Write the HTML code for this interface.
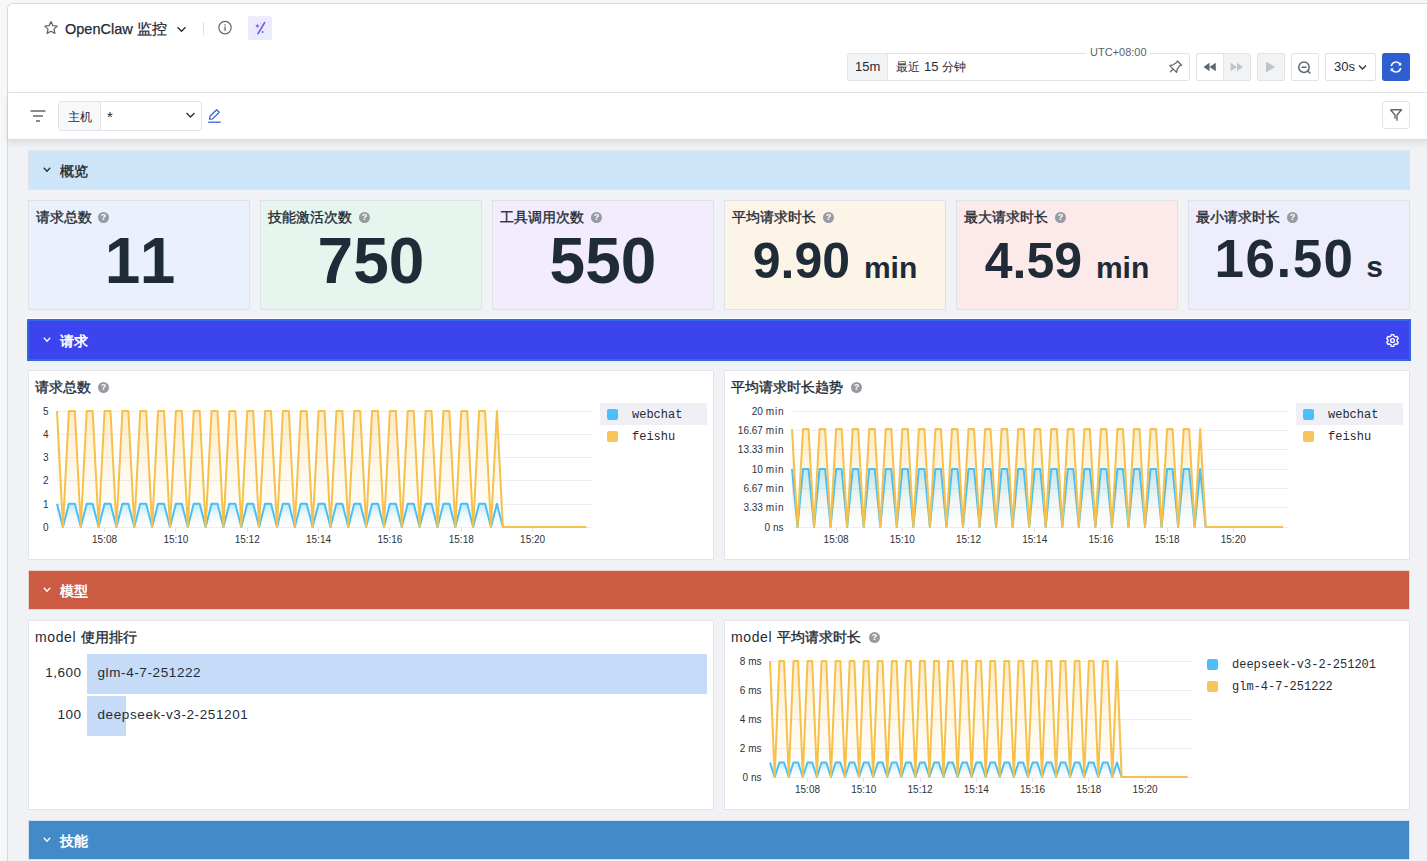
<!DOCTYPE html><html><head><meta charset="utf-8"><title>OpenClaw 监控</title><style>
*{box-sizing:border-box;margin:0;padding:0}
html,body{width:1427px;height:861px;overflow:hidden;background:#f6f7f8;font-family:"Liberation Sans", sans-serif;color:#1f2b36}
.a{position:absolute}
#frame{position:absolute;left:7px;top:3px;width:1440px;height:900px;border:1px solid #d6d9dd;border-radius:6px;background:#f0f2f5;overflow:hidden}
.sec{position:absolute;left:28px;width:1382px;height:40px;border:1px solid #dfe2e7}
.sec .chev{position:absolute;left:15px;top:16px;width:7px;height:7px}
.sec .t{position:absolute;left:31px;top:11px;font-size:14px;font-weight:400;-webkit-text-stroke:0.4px currentColor;line-height:18px}
.card{position:absolute;top:200px;width:222px;height:110px;border:1px solid #dfe3e8}
.card .t{position:absolute;left:7px;top:7px;font-size:14px;font-weight:400;-webkit-text-stroke:0.35px currentColor;line-height:18px;white-space:nowrap}
.q{position:absolute;-webkit-text-stroke:0;width:11px;height:11px;border-radius:50%;background:#979ba1;color:#fff;font-size:9px;line-height:11px;text-align:center;font-weight:bold;font-family:"Liberation Sans", sans-serif}
.card .v{position:absolute;left:0;right:0;top:28px;text-align:center;font-weight:bold;white-space:nowrap}
.panel{position:absolute;width:686px;height:190px;border:1px solid #e1e4e8;background:#fff}
.ptitle{position:absolute;font-size:14px;font-weight:400;-webkit-text-stroke:0.35px currentColor;line-height:18px;white-space:nowrap}
.btn{position:absolute;top:53px;height:28px;border:1px solid #dfe2e6;border-radius:2px;background:#fff}
.leg{position:absolute;font-family:"Liberation Mono", monospace;font-size:12px;line-height:22px;height:22px;white-space:nowrap}
.leg i{position:absolute;left:7px;top:6px;width:11px;height:11px;border-radius:2px}
.leg span{position:absolute;left:32px;top:1px}
</style></head><body>
<div id="frame"></div>
<div class="a" style="left:8px;top:4px;width:1419px;height:88px;background:#fff;border-top-left-radius:5px"></div>
<div class="a" style="left:8px;top:92px;width:1419px;height:1px;background:#e3e5e9"></div>
<div class="a" style="left:8px;top:93px;width:1419px;height:47px;background:#fff;border-bottom:1px solid #dcdde1;box-shadow:0 3px 6px rgba(20,30,50,0.1)"></div>
<svg class="a" style="left:43px;top:20px" width="16" height="16" viewBox="0 0 16 16"><path d="M8 1.6 L9.9 5.6 L14.2 6.1 L11 9.1 L11.9 13.4 L8 11.2 L4.1 13.4 L5 9.1 L1.8 6.1 L6.1 5.6 Z" fill="none" stroke="#5f6870" stroke-width="1.3" stroke-linejoin="round"/></svg>
<div class="a" style="left:65px;top:20px;font-size:14.5px;line-height:18px;white-space:nowrap;color:#1f2b36;-webkit-text-stroke:0.25px currentColor">OpenClaw</div><div class="a" style="left:137px;top:20px;font-size:14.5px;line-height:18px;white-space:nowrap;color:#1f2b36;-webkit-text-stroke:0.25px currentColor">监控</div>
<svg class="a" style="left:176px;top:25px" width="11" height="9" viewBox="0 0 11 9"><path d="M1.5 2.2 L5.5 6.2 L9.5 2.2" fill="none" stroke="#2a333c" stroke-width="1.5"/></svg>
<div class="a" style="left:203px;top:22px;width:1px;height:13px;background:#dcdfe3"></div>
<svg class="a" style="left:217px;top:20px" width="16" height="16" viewBox="0 0 16 16"><circle cx="8" cy="7.6" r="6.2" fill="none" stroke="#5f6870" stroke-width="1.2"/><rect x="7.4" y="6.6" width="1.3" height="4.2" fill="#5f6870"/><rect x="7.4" y="4.3" width="1.3" height="1.3" fill="#5f6870"/></svg>
<div class="a" style="left:248px;top:16px;width:24px;height:24px;border-radius:2px;background:linear-gradient(135deg,#f1ecfc,#ebeafb 60%,#e8eefb)"></div>
<svg class="a" style="left:248px;top:12px" width="24" height="28" viewBox="0 0 24 28"><path d="M16.6 10.6 L10 21.6" stroke="#6a5cf2" stroke-width="1.7" stroke-linecap="round"/><path d="M9.4 11.8 l0.7 1.5 1.5 0.7 -1.5 0.7 -0.7 1.5 -0.7 -1.5 -1.5 -0.7 1.5 -0.7z" fill="#6a5cf2"/><circle cx="14.6" cy="20" r="0.95" fill="#6a5cf2"/><circle cx="12.4" cy="11.2" r="0.5" fill="#9d94f5"/></svg>
<div class="a" style="left:847px;top:53px;width:343px;height:28px;border:1px solid #dfe2e6;border-radius:3px;background:#fff"></div>
<div class="a" style="left:848px;top:54px;width:40px;height:26px;background:#f2f3f5;border-right:1px solid #e3e5e9"></div>
<div class="a" style="left:855px;top:58px;font-size:13px;line-height:18px;color:#1f2b36">15m</div>
<div class="a" style="left:896px;top:58px;font-size:12px;line-height:18px;color:#1f2b36;white-space:nowrap">最近</div><div class="a" style="left:924px;top:58px;font-size:13px;line-height:18px;color:#1f2b36">15</div><div class="a" style="left:942px;top:58px;font-size:12px;line-height:18px;color:#1f2b36;white-space:nowrap">分钟</div>
<div class="a" style="left:1086px;top:45px;width:64px;height:14px;background:#fff"></div>
<div class="a" style="left:1090px;top:45px;font-size:11px;line-height:14px;color:#5a636b;white-space:nowrap">UTC+08:00</div>
<svg class="a" style="left:1168px;top:59px" width="15" height="15" viewBox="0 0 15 15"><path d="M9.4 2 L13.6 6.2 L11.7 6.6 L9.3 10 L8.6 13.4 L1.7 6.6 L5.1 5.8 L8.6 3.5 Z M4.9 10.3 L2.3 12.9" fill="none" stroke="#5f6870" stroke-width="1.3" stroke-linejoin="round" stroke-linecap="round"/></svg>
<div class="btn" style="left:1196px;width:55px"></div>
<div class="a" style="left:1223px;top:54px;width:27px;height:26px;background:#f2f3f5;border-left:1px solid #e3e5e9;border-radius:0 2px 2px 0"></div>
<svg class="a" style="left:1203px;top:62px" width="14" height="10" viewBox="0 0 14 10"><path d="M0.5 5 L6.5 0.8 L6.5 9.2 Z M6.5 5 L12.8 0.8 L12.8 9.2 Z" fill="#5f6870"/></svg>
<svg class="a" style="left:1230px;top:62px" width="14" height="10" viewBox="0 0 14 10"><path d="M13 5 L7 0.8 L7 9.2 Z M7 5 L0.7 0.8 L0.7 9.2 Z" fill="#bfc3c8"/></svg>
<div class="btn" style="left:1257px;width:28px;background:#f2f3f5"></div>
<svg class="a" style="left:1265px;top:61px" width="11" height="12" viewBox="0 0 11 12"><path d="M1 0.6 L10 6 L1 11.4 Z" fill="#bfc3c8"/></svg>
<div class="btn" style="left:1291px;width:28px"></div>
<svg class="a" style="left:1297px;top:60px" width="15" height="15" viewBox="0 0 15 15"><circle cx="7" cy="7.2" r="5.2" fill="none" stroke="#5f6870" stroke-width="1.5"/><path d="M4.6 7.2 H9.4 M10.9 11.1 L13.3 13.5" stroke="#5f6870" stroke-width="1.5"/></svg>
<div class="btn" style="left:1325px;width:51px"></div>
<div class="a" style="left:1334px;top:58px;font-size:13px;line-height:18px;color:#1f2b36">30s</div>
<svg class="a" style="left:1358px;top:64px" width="9" height="7" viewBox="0 0 9 7"><path d="M1 1.5 L4.5 5 L8 1.5" fill="none" stroke="#2a333c" stroke-width="1.3"/></svg>
<div class="a" style="left:1382px;top:53px;width:28px;height:28px;border-radius:3px;background:#2e5ecf"></div>
<svg class="a" style="left:1389px;top:60px" width="14" height="14" viewBox="0 0 14 14"><path d="M2.3 6.2 A4.8 4.8 0 0 1 11.2 4.4 M11.7 7.8 A4.8 4.8 0 0 1 2.8 9.6" fill="none" stroke="#fff" stroke-width="1.5"/><path d="M12.3 2.2 L12.3 5.6 L9 5.6 Z M1.7 11.8 L1.7 8.4 L5 8.4 Z" fill="#fff"/></svg>
<svg class="a" style="left:29px;top:108px" width="18" height="16" viewBox="0 0 18 16"><path d="M1.5 3 H16.5 M4 8 H14 M7 13 H11" stroke="#5f6870" stroke-width="1.5"/></svg>
<div class="a" style="left:58px;top:101px;width:144px;height:30px;border:1px solid #dfe2e6;border-radius:3px;background:#fff"></div>
<div class="a" style="left:59px;top:102px;width:42px;height:28px;background:#f7f8fa;border-right:1px solid #e3e5e9"></div>
<div class="a" style="left:68px;top:107.5px;font-size:12px;line-height:18px;color:#1f2b36">主机</div>
<div class="a" style="left:107px;top:108px;font-size:15px;line-height:18px;color:#1f2b36">*</div>
<svg class="a" style="left:185px;top:111px" width="11" height="9" viewBox="0 0 11 9"><path d="M1.5 2 L5.5 6 L9.5 2" fill="none" stroke="#2a333c" stroke-width="1.4"/></svg>
<svg class="a" style="left:207px;top:108px" width="15" height="16" viewBox="0 0 15 16"><path d="M2.5 11.2 L3 8.3 L9.6 1.7 L12.2 4.3 L5.6 10.9 Z" fill="none" stroke="#3b63d8" stroke-width="1.3" stroke-linejoin="round"/><path d="M1.2 14.2 H13.6" stroke="#3b63d8" stroke-width="1.3"/></svg>
<div class="a" style="left:1382px;top:101px;width:28px;height:28px;border:1px solid #dfe2e6;border-radius:3px;background:#fff"></div>
<svg class="a" style="left:1389px;top:108px" width="14" height="14" viewBox="0 0 14 14"><path d="M1.5 1.8 H12.5 L8 7 V12.8 M6 10.8 V7 L1.5 1.8" fill="none" stroke="#5f6870" stroke-width="1.4" stroke-linejoin="round"/></svg>
<div class="sec" style="top:150px;background:#cce5f9;"><svg class="chev" viewBox="0 0 8 6" style="width:8px;height:6px;left:14px;top:16px"><path d="M0.8 0.8 L4 4.2 L7.2 0.8" fill="none" stroke="#1f2b36" stroke-width="1.3"/></svg><div class="t" style="color:#1f2b36;-webkit-text-stroke:0.4px currentColor">概览</div></div>
<div class="a" style="left:27px;top:318px;width:1384px;height:1px;background:#fff"></div>
<div class="a" style="left:27px;top:319px;width:1384px;height:42px;background:#3b44ef;border:2px solid #2f68e2"></div>
<svg class="a" style="left:43px;top:337px" width="8" height="6" viewBox="0 0 8 6"><path d="M0.8 0.8 L4 4.2 L7.2 0.8" fill="none" stroke="#fff" stroke-width="1.3"/></svg>
<div class="a" style="left:60px;top:332px;font-size:14px;font-weight:400;-webkit-text-stroke:0.55px currentColor;line-height:18px;color:#fff">请求</div>
<svg class="a" style="left:1385px;top:333px" width="15" height="15" viewBox="0 0 24 24"><path fill="none" stroke="#fff" stroke-width="2.2" stroke-linejoin="round" d="M10 2.5 h4 l0.6 2.6 a7.5 7.5 0 0 1 2 1.2 l2.6 -0.8 2 3.4 -2 1.8 a7.5 7.5 0 0 1 0 2.4 l2 1.8 -2 3.4 -2.6 -0.8 a7.5 7.5 0 0 1 -2 1.2 l-0.6 2.6 h-4 l-0.6 -2.6 a7.5 7.5 0 0 1 -2 -1.2 l-2.6 0.8 -2 -3.4 2 -1.8 a7.5 7.5 0 0 1 0 -2.4 l-2 -1.8 2 -3.4 2.6 0.8 a7.5 7.5 0 0 1 2 -1.2 z"/><circle cx="12" cy="12" r="3" fill="none" stroke="#fff" stroke-width="2.2"/></svg>
<div class="sec" style="top:570px;background:#cc5b43;border-color:#e6d6d2"><svg class="chev" viewBox="0 0 8 6" style="width:8px;height:6px;left:14px;top:16px"><path d="M0.8 0.8 L4 4.2 L7.2 0.8" fill="none" stroke="#fff" stroke-width="1.3"/></svg><div class="t" style="color:#fff;-webkit-text-stroke:0.55px currentColor">模型</div></div>
<div class="sec" style="top:820px;background:#438ac8;border-color:#d5e0ea"><svg class="chev" viewBox="0 0 8 6" style="width:8px;height:6px;left:14px;top:16px"><path d="M0.8 0.8 L4 4.2 L7.2 0.8" fill="none" stroke="#fff" stroke-width="1.3"/></svg><div class="t" style="color:#fff;-webkit-text-stroke:0.55px currentColor">技能</div></div>
<div class="card" style="left:28px;background:#eaf1fd"><div class="t">请求总数</div>
<div class="v" style="font-size:64px;line-height:70px;top:25px ;margin-left:5px;letter-spacing:3px">11</div>
</div>
<div class="card" style="left:260px;background:#e6f6ef"><div class="t">技能激活次数</div>
<div class="v" style="font-size:64px;line-height:70px;top:25px">750</div>
</div>
<div class="card" style="left:492px;background:#f2ecfd"><div class="t">工具调用次数</div>
<div class="v" style="font-size:64px;line-height:70px;top:25px">550</div>
</div>
<div class="card" style="left:724px;background:#fdf4e8"><div class="t">平均请求时长</div>
<div class="v" style="font-size:50px;line-height:70px;top:24.5px">9.90 <span style="font-size:30px;letter-spacing:0">min</span></div>
</div>
<div class="card" style="left:956px;background:#fce9e9"><div class="t">最大请求时长</div>
<div class="v" style="font-size:50px;line-height:70px;top:24.5px">4.59 <span style="font-size:30px;letter-spacing:0">min</span></div>
</div>
<div class="card" style="left:1188px;background:#ededfb"><div class="t">最小请求时长</div>
<div class="v" style="font-size:53px;line-height:70px;top:23px;letter-spacing:1.5px;margin-left:-0.5px">16.50 <span style="font-size:30px;letter-spacing:0;margin-left:-4.5px">s</span></div>
</div>
<span class="q" style="left:98px;top:212px">?</span>
<span class="q" style="left:359px;top:212px">?</span>
<span class="q" style="left:591px;top:212px">?</span>
<span class="q" style="left:823px;top:212px">?</span>
<span class="q" style="left:1055px;top:212px">?</span>
<span class="q" style="left:1287px;top:212px">?</span>
<div class="panel" style="left:28px;top:370px"></div>
<div class="panel" style="left:724px;top:370px"></div>
<div class="panel" style="left:28px;top:620px"></div>
<div class="panel" style="left:724px;top:620px"></div>
<div class="ptitle" style="left:35px;top:378px">请求总数</div><span class="q" style="left:98px;top:381.5px">?</span>
<div class="ptitle" style="left:731px;top:378px">平均请求时长趋势</div><span class="q" style="left:851px;top:381.5px">?</span>
<div class="ptitle" style="left:35px;top:628px;letter-spacing:0.6px;-webkit-text-stroke:0">model</div><div class="ptitle" style="left:81px;top:628px">使用排行</div>
<div class="ptitle" style="left:731px;top:628px;letter-spacing:0.6px;-webkit-text-stroke:0">model</div><div class="ptitle" style="left:777px;top:628px">平均请求时长</div><span class="q" style="left:869px;top:632px">?</span>
<div class="leg" style="left:600px;top:403px;width:107px;background:#eff0f5;"><i style="background:#4cbff8"></i><span>webchat</span></div>
<div class="leg" style="left:600px;top:425px;width:107px;"><i style="background:#f8c55a"></i><span>feishu</span></div>
<div class="leg" style="left:1296px;top:403px;width:107px;background:#eff0f5;"><i style="background:#4cbff8"></i><span>webchat</span></div>
<div class="leg" style="left:1296px;top:425px;width:107px;"><i style="background:#f8c55a"></i><span>feishu</span></div>
<div class="leg" style="left:1200px;top:653px;width:200px;"><i style="background:#4cbff8"></i><span>deepseek-v3-2-251201</span></div>
<div class="leg" style="left:1200px;top:675px;width:200px;"><i style="background:#f8c55a"></i><span>glm-4-7-251222</span></div>
<div class="a" style="left:87px;top:654px;width:620px;height:40px;background:#c6dbf8"></div>
<div class="a" style="left:87px;top:696px;width:39px;height:40px;background:#c6dbf8"></div>
<div class="a" style="left:0;top:664px;width:81.5px;text-align:right;font-size:13.5px;line-height:18px;letter-spacing:0.5px">1,600</div>
<div class="a" style="left:0;top:706px;width:81.5px;text-align:right;font-size:13.5px;line-height:18px;letter-spacing:0.5px">100</div>
<div class="a" style="left:97.5px;top:664px;font-size:13.5px;line-height:18px;letter-spacing:0.6px">glm-4-7-251222</div>
<div class="a" style="left:97.5px;top:706px;font-size:13.5px;line-height:18px;letter-spacing:0.6px">deepseek-v3-2-251201</div>
<svg class="a" style="left:0;top:0" width="1427" height="861" viewBox="0 0 1427 861" font-family='"Liberation Sans", sans-serif' font-size="10" fill="#2b333b">
<defs>
<linearGradient id="go" x1="0" y1="0" x2="0" y2="1"><stop offset="0" stop-color="#f7c04a" stop-opacity="0.3"/><stop offset="0.55" stop-color="#f7c04a" stop-opacity="0.1"/><stop offset="1" stop-color="#f7c04a" stop-opacity="0"/></linearGradient>
<linearGradient id="gb" x1="0" y1="0" x2="0" y2="1"><stop offset="0" stop-color="#3fbdf4" stop-opacity="0.3"/><stop offset="0.5" stop-color="#3fbdf4" stop-opacity="0.08"/><stop offset="1" stop-color="#3fbdf4" stop-opacity="0"/></linearGradient>
</defs>
<line x1="58.0" y1="527.50" x2="593.0" y2="527.50" stroke="#eceef2" stroke-width="1"/>
<text x="48.5" y="530.60" text-anchor="end">0</text>
<line x1="58.0" y1="504.50" x2="593.0" y2="504.50" stroke="#eceef2" stroke-width="1"/>
<text x="48.5" y="507.60" text-anchor="end">1</text>
<line x1="58.0" y1="480.50" x2="593.0" y2="480.50" stroke="#eceef2" stroke-width="1"/>
<text x="48.5" y="483.60" text-anchor="end">2</text>
<line x1="58.0" y1="457.50" x2="593.0" y2="457.50" stroke="#eceef2" stroke-width="1"/>
<text x="48.5" y="460.60" text-anchor="end">3</text>
<line x1="58.0" y1="434.50" x2="593.0" y2="434.50" stroke="#eceef2" stroke-width="1"/>
<text x="48.5" y="437.60" text-anchor="end">4</text>
<line x1="58.0" y1="411.50" x2="593.0" y2="411.50" stroke="#eceef2" stroke-width="1"/>
<text x="48.5" y="414.60" text-anchor="end">5</text>
<line x1="104.50" y1="528.00" x2="104.50" y2="532.00" stroke="#dfe2e6" stroke-width="1"/>
<text x="104.56" y="543.00" text-anchor="middle">15:08</text>
<line x1="175.50" y1="528.00" x2="175.50" y2="532.00" stroke="#dfe2e6" stroke-width="1"/>
<text x="175.90" y="543.00" text-anchor="middle">15:10</text>
<line x1="247.50" y1="528.00" x2="247.50" y2="532.00" stroke="#dfe2e6" stroke-width="1"/>
<text x="247.24" y="543.00" text-anchor="middle">15:12</text>
<line x1="318.50" y1="528.00" x2="318.50" y2="532.00" stroke="#dfe2e6" stroke-width="1"/>
<text x="318.58" y="543.00" text-anchor="middle">15:14</text>
<line x1="389.50" y1="528.00" x2="389.50" y2="532.00" stroke="#dfe2e6" stroke-width="1"/>
<text x="389.92" y="543.00" text-anchor="middle">15:16</text>
<line x1="461.50" y1="528.00" x2="461.50" y2="532.00" stroke="#dfe2e6" stroke-width="1"/>
<text x="461.26" y="543.00" text-anchor="middle">15:18</text>
<line x1="532.50" y1="528.00" x2="532.50" y2="532.00" stroke="#dfe2e6" stroke-width="1"/>
<text x="532.60" y="543.00" text-anchor="middle">15:20</text>
<path d="M57.00,411.00 L62.95,527.00 L68.89,411.00 L74.84,411.00 L80.78,527.00 L86.72,411.00 L92.67,411.00 L98.62,527.00 L104.56,411.00 L110.50,411.00 L116.45,527.00 L122.40,411.00 L128.34,411.00 L134.28,527.00 L140.23,411.00 L146.18,411.00 L152.12,527.00 L158.06,411.00 L164.01,411.00 L169.96,527.00 L175.90,411.00 L181.84,411.00 L187.79,527.00 L193.74,411.00 L199.68,411.00 L205.62,527.00 L211.57,411.00 L217.52,411.00 L223.46,527.00 L229.41,411.00 L235.35,411.00 L241.30,527.00 L247.24,411.00 L253.19,411.00 L259.13,527.00 L265.08,411.00 L271.02,411.00 L276.97,527.00 L282.91,411.00 L288.86,411.00 L294.80,527.00 L300.75,411.00 L306.69,411.00 L312.63,527.00 L318.58,411.00 L324.53,411.00 L330.47,527.00 L336.42,411.00 L342.36,411.00 L348.31,527.00 L354.25,411.00 L360.19,411.00 L366.14,527.00 L372.09,411.00 L378.03,411.00 L383.98,527.00 L389.92,411.00 L395.87,411.00 L401.81,527.00 L407.75,411.00 L413.70,411.00 L419.65,527.00 L425.59,411.00 L431.54,411.00 L437.48,527.00 L443.43,411.00 L449.37,411.00 L455.31,527.00 L461.26,411.00 L467.21,411.00 L473.15,527.00 L479.10,411.00 L485.04,411.00 L490.99,527.00 L496.93,411.00 L502.88,527.00 L508.82,527.00 L514.77,527.00 L520.71,527.00 L526.65,527.00 L532.60,527.00 L538.55,527.00 L544.49,527.00 L550.43,527.00 L556.38,527.00 L562.33,527.00 L568.27,527.00 L574.22,527.00 L580.16,527.00 L586.11,527.00 L586.11,527.00 L57.00,527.00 Z" fill="url(#go)"/>
<path d="M57.00,503.80 L62.95,527.00 L68.89,503.80 L74.84,503.80 L80.78,527.00 L86.72,503.80 L92.67,503.80 L98.62,527.00 L104.56,503.80 L110.50,503.80 L116.45,527.00 L122.40,503.80 L128.34,503.80 L134.28,527.00 L140.23,503.80 L146.18,503.80 L152.12,527.00 L158.06,503.80 L164.01,503.80 L169.96,527.00 L175.90,503.80 L181.84,503.80 L187.79,527.00 L193.74,503.80 L199.68,503.80 L205.62,527.00 L211.57,503.80 L217.52,503.80 L223.46,527.00 L229.41,503.80 L235.35,503.80 L241.30,527.00 L247.24,503.80 L253.19,503.80 L259.13,527.00 L265.08,503.80 L271.02,503.80 L276.97,527.00 L282.91,503.80 L288.86,503.80 L294.80,527.00 L300.75,503.80 L306.69,503.80 L312.63,527.00 L318.58,503.80 L324.53,503.80 L330.47,527.00 L336.42,503.80 L342.36,503.80 L348.31,527.00 L354.25,503.80 L360.19,503.80 L366.14,527.00 L372.09,503.80 L378.03,503.80 L383.98,527.00 L389.92,503.80 L395.87,503.80 L401.81,527.00 L407.75,503.80 L413.70,503.80 L419.65,527.00 L425.59,503.80 L431.54,503.80 L437.48,527.00 L443.43,503.80 L449.37,503.80 L455.31,527.00 L461.26,503.80 L467.21,503.80 L473.15,527.00 L479.10,503.80 L485.04,503.80 L490.99,527.00 L496.93,503.80 L502.88,527.00 L508.82,527.00 L514.77,527.00 L520.71,527.00 L526.65,527.00 L532.60,527.00 L538.55,527.00 L544.49,527.00 L550.43,527.00 L556.38,527.00 L562.33,527.00 L568.27,527.00 L574.22,527.00 L580.16,527.00 L586.11,527.00 L586.11,527.00 L57.00,527.00 Z" fill="url(#gb)"/>
<path d="M57.00,503.80 L62.95,527.00 L68.89,503.80 L74.84,503.80 L80.78,527.00 L86.72,503.80 L92.67,503.80 L98.62,527.00 L104.56,503.80 L110.50,503.80 L116.45,527.00 L122.40,503.80 L128.34,503.80 L134.28,527.00 L140.23,503.80 L146.18,503.80 L152.12,527.00 L158.06,503.80 L164.01,503.80 L169.96,527.00 L175.90,503.80 L181.84,503.80 L187.79,527.00 L193.74,503.80 L199.68,503.80 L205.62,527.00 L211.57,503.80 L217.52,503.80 L223.46,527.00 L229.41,503.80 L235.35,503.80 L241.30,527.00 L247.24,503.80 L253.19,503.80 L259.13,527.00 L265.08,503.80 L271.02,503.80 L276.97,527.00 L282.91,503.80 L288.86,503.80 L294.80,527.00 L300.75,503.80 L306.69,503.80 L312.63,527.00 L318.58,503.80 L324.53,503.80 L330.47,527.00 L336.42,503.80 L342.36,503.80 L348.31,527.00 L354.25,503.80 L360.19,503.80 L366.14,527.00 L372.09,503.80 L378.03,503.80 L383.98,527.00 L389.92,503.80 L395.87,503.80 L401.81,527.00 L407.75,503.80 L413.70,503.80 L419.65,527.00 L425.59,503.80 L431.54,503.80 L437.48,527.00 L443.43,503.80 L449.37,503.80 L455.31,527.00 L461.26,503.80 L467.21,503.80 L473.15,527.00 L479.10,503.80 L485.04,503.80 L490.99,527.00 L496.93,503.80 L502.88,527.00 L508.82,527.00 L514.77,527.00 L520.71,527.00 L526.65,527.00 L532.60,527.00 L538.55,527.00 L544.49,527.00 L550.43,527.00 L556.38,527.00 L562.33,527.00 L568.27,527.00 L574.22,527.00 L580.16,527.00 L586.11,527.00" fill="none" stroke="#48bff7" stroke-width="2" stroke-linejoin="round"/>
<path d="M57.00,411.00 L62.95,527.00 L68.89,411.00 L74.84,411.00 L80.78,527.00 L86.72,411.00 L92.67,411.00 L98.62,527.00 L104.56,411.00 L110.50,411.00 L116.45,527.00 L122.40,411.00 L128.34,411.00 L134.28,527.00 L140.23,411.00 L146.18,411.00 L152.12,527.00 L158.06,411.00 L164.01,411.00 L169.96,527.00 L175.90,411.00 L181.84,411.00 L187.79,527.00 L193.74,411.00 L199.68,411.00 L205.62,527.00 L211.57,411.00 L217.52,411.00 L223.46,527.00 L229.41,411.00 L235.35,411.00 L241.30,527.00 L247.24,411.00 L253.19,411.00 L259.13,527.00 L265.08,411.00 L271.02,411.00 L276.97,527.00 L282.91,411.00 L288.86,411.00 L294.80,527.00 L300.75,411.00 L306.69,411.00 L312.63,527.00 L318.58,411.00 L324.53,411.00 L330.47,527.00 L336.42,411.00 L342.36,411.00 L348.31,527.00 L354.25,411.00 L360.19,411.00 L366.14,527.00 L372.09,411.00 L378.03,411.00 L383.98,527.00 L389.92,411.00 L395.87,411.00 L401.81,527.00 L407.75,411.00 L413.70,411.00 L419.65,527.00 L425.59,411.00 L431.54,411.00 L437.48,527.00 L443.43,411.00 L449.37,411.00 L455.31,527.00 L461.26,411.00 L467.21,411.00 L473.15,527.00 L479.10,411.00 L485.04,411.00 L490.99,527.00 L496.93,411.00 L502.88,527.00 L508.82,527.00 L514.77,527.00 L520.71,527.00 L526.65,527.00 L532.60,527.00 L538.55,527.00 L544.49,527.00 L550.43,527.00 L556.38,527.00 L562.33,527.00 L568.27,527.00 L574.22,527.00 L580.16,527.00 L586.11,527.00" fill="none" stroke="#f7c04a" stroke-width="2" stroke-linejoin="round"/>
<line x1="793.0" y1="527.50" x2="1289.0" y2="527.50" stroke="#eceef2" stroke-width="1"/>
<text x="783.5" y="530.60" text-anchor="end">0 ns</text>
<line x1="793.0" y1="507.50" x2="1289.0" y2="507.50" stroke="#eceef2" stroke-width="1"/>
<text x="784.5" y="510.60" text-anchor="end">3.33 <tspan letter-spacing="0.9">min</tspan></text>
<line x1="793.0" y1="488.50" x2="1289.0" y2="488.50" stroke="#eceef2" stroke-width="1"/>
<text x="784.5" y="491.60" text-anchor="end">6.67 <tspan letter-spacing="0.9">min</tspan></text>
<line x1="793.0" y1="469.50" x2="1289.0" y2="469.50" stroke="#eceef2" stroke-width="1"/>
<text x="784.5" y="472.60" text-anchor="end">10 <tspan letter-spacing="0.9">min</tspan></text>
<line x1="793.0" y1="449.50" x2="1289.0" y2="449.50" stroke="#eceef2" stroke-width="1"/>
<text x="784.5" y="452.60" text-anchor="end">13.33 <tspan letter-spacing="0.9">min</tspan></text>
<line x1="793.0" y1="430.50" x2="1289.0" y2="430.50" stroke="#eceef2" stroke-width="1"/>
<text x="784.5" y="433.60" text-anchor="end">16.67 <tspan letter-spacing="0.9">min</tspan></text>
<line x1="793.0" y1="411.50" x2="1289.0" y2="411.50" stroke="#eceef2" stroke-width="1"/>
<text x="784.5" y="414.60" text-anchor="end">20 <tspan letter-spacing="0.9">min</tspan></text>
<line x1="836.50" y1="528.00" x2="836.50" y2="532.00" stroke="#dfe2e6" stroke-width="1"/>
<text x="836.13" y="543.00" text-anchor="middle">15:08</text>
<line x1="902.50" y1="528.00" x2="902.50" y2="532.00" stroke="#dfe2e6" stroke-width="1"/>
<text x="902.32" y="543.00" text-anchor="middle">15:10</text>
<line x1="968.50" y1="528.00" x2="968.50" y2="532.00" stroke="#dfe2e6" stroke-width="1"/>
<text x="968.51" y="543.00" text-anchor="middle">15:12</text>
<line x1="1034.50" y1="528.00" x2="1034.50" y2="532.00" stroke="#dfe2e6" stroke-width="1"/>
<text x="1034.70" y="543.00" text-anchor="middle">15:14</text>
<line x1="1100.50" y1="528.00" x2="1100.50" y2="532.00" stroke="#dfe2e6" stroke-width="1"/>
<text x="1100.90" y="543.00" text-anchor="middle">15:16</text>
<line x1="1167.50" y1="528.00" x2="1167.50" y2="532.00" stroke="#dfe2e6" stroke-width="1"/>
<text x="1167.09" y="543.00" text-anchor="middle">15:18</text>
<line x1="1233.50" y1="528.00" x2="1233.50" y2="532.00" stroke="#dfe2e6" stroke-width="1"/>
<text x="1233.28" y="543.00" text-anchor="middle">15:20</text>
<path d="M792.00,428.98 L797.52,527.00 L803.03,428.98 L808.55,428.98 L814.06,527.00 L819.58,428.98 L825.10,428.98 L830.61,527.00 L836.13,428.98 L841.64,428.98 L847.16,527.00 L852.68,428.98 L858.19,428.98 L863.71,527.00 L869.22,428.98 L874.74,428.98 L880.26,527.00 L885.77,428.98 L891.29,428.98 L896.80,527.00 L902.32,428.98 L907.84,428.98 L913.35,527.00 L918.87,428.98 L924.38,428.98 L929.90,527.00 L935.42,428.98 L940.93,428.98 L946.45,527.00 L951.96,428.98 L957.48,428.98 L963.00,527.00 L968.51,428.98 L974.03,428.98 L979.54,527.00 L985.06,428.98 L990.58,428.98 L996.09,527.00 L1001.61,428.98 L1007.12,428.98 L1012.64,527.00 L1018.16,428.98 L1023.67,428.98 L1029.19,527.00 L1034.70,428.98 L1040.22,428.98 L1045.74,527.00 L1051.25,428.98 L1056.77,428.98 L1062.28,527.00 L1067.80,428.98 L1073.32,428.98 L1078.83,527.00 L1084.35,428.98 L1089.86,428.98 L1095.38,527.00 L1100.90,428.98 L1106.41,428.98 L1111.93,527.00 L1117.44,428.98 L1122.96,428.98 L1128.48,527.00 L1133.99,428.98 L1139.51,428.98 L1145.02,527.00 L1150.54,428.98 L1156.06,428.98 L1161.57,527.00 L1167.09,428.98 L1172.60,428.98 L1178.12,527.00 L1183.64,428.98 L1189.15,428.98 L1194.67,527.00 L1200.18,428.98 L1205.70,527.00 L1211.22,527.00 L1216.73,527.00 L1222.25,527.00 L1227.76,527.00 L1233.28,527.00 L1238.80,527.00 L1244.31,527.00 L1249.83,527.00 L1255.34,527.00 L1260.86,527.00 L1266.38,527.00 L1271.89,527.00 L1277.41,527.00 L1282.92,527.00 L1282.92,527.00 L792.00,527.00 Z" fill="url(#go)"/>
<path d="M792.00,469.00 L797.52,527.00 L803.03,469.00 L808.55,469.00 L814.06,527.00 L819.58,469.00 L825.10,469.00 L830.61,527.00 L836.13,469.00 L841.64,469.00 L847.16,527.00 L852.68,469.00 L858.19,469.00 L863.71,527.00 L869.22,469.00 L874.74,469.00 L880.26,527.00 L885.77,469.00 L891.29,469.00 L896.80,527.00 L902.32,469.00 L907.84,469.00 L913.35,527.00 L918.87,469.00 L924.38,469.00 L929.90,527.00 L935.42,469.00 L940.93,469.00 L946.45,527.00 L951.96,469.00 L957.48,469.00 L963.00,527.00 L968.51,469.00 L974.03,469.00 L979.54,527.00 L985.06,469.00 L990.58,469.00 L996.09,527.00 L1001.61,469.00 L1007.12,469.00 L1012.64,527.00 L1018.16,469.00 L1023.67,469.00 L1029.19,527.00 L1034.70,469.00 L1040.22,469.00 L1045.74,527.00 L1051.25,469.00 L1056.77,469.00 L1062.28,527.00 L1067.80,469.00 L1073.32,469.00 L1078.83,527.00 L1084.35,469.00 L1089.86,469.00 L1095.38,527.00 L1100.90,469.00 L1106.41,469.00 L1111.93,527.00 L1117.44,469.00 L1122.96,469.00 L1128.48,527.00 L1133.99,469.00 L1139.51,469.00 L1145.02,527.00 L1150.54,469.00 L1156.06,469.00 L1161.57,527.00 L1167.09,469.00 L1172.60,469.00 L1178.12,527.00 L1183.64,469.00 L1189.15,469.00 L1194.67,527.00 L1200.18,469.00 L1205.70,527.00 L1211.22,527.00 L1216.73,527.00 L1222.25,527.00 L1227.76,527.00 L1233.28,527.00 L1238.80,527.00 L1244.31,527.00 L1249.83,527.00 L1255.34,527.00 L1260.86,527.00 L1266.38,527.00 L1271.89,527.00 L1277.41,527.00 L1282.92,527.00 L1282.92,527.00 L792.00,527.00 Z" fill="url(#gb)"/>
<path d="M792.00,469.00 L797.52,527.00 L803.03,469.00 L808.55,469.00 L814.06,527.00 L819.58,469.00 L825.10,469.00 L830.61,527.00 L836.13,469.00 L841.64,469.00 L847.16,527.00 L852.68,469.00 L858.19,469.00 L863.71,527.00 L869.22,469.00 L874.74,469.00 L880.26,527.00 L885.77,469.00 L891.29,469.00 L896.80,527.00 L902.32,469.00 L907.84,469.00 L913.35,527.00 L918.87,469.00 L924.38,469.00 L929.90,527.00 L935.42,469.00 L940.93,469.00 L946.45,527.00 L951.96,469.00 L957.48,469.00 L963.00,527.00 L968.51,469.00 L974.03,469.00 L979.54,527.00 L985.06,469.00 L990.58,469.00 L996.09,527.00 L1001.61,469.00 L1007.12,469.00 L1012.64,527.00 L1018.16,469.00 L1023.67,469.00 L1029.19,527.00 L1034.70,469.00 L1040.22,469.00 L1045.74,527.00 L1051.25,469.00 L1056.77,469.00 L1062.28,527.00 L1067.80,469.00 L1073.32,469.00 L1078.83,527.00 L1084.35,469.00 L1089.86,469.00 L1095.38,527.00 L1100.90,469.00 L1106.41,469.00 L1111.93,527.00 L1117.44,469.00 L1122.96,469.00 L1128.48,527.00 L1133.99,469.00 L1139.51,469.00 L1145.02,527.00 L1150.54,469.00 L1156.06,469.00 L1161.57,527.00 L1167.09,469.00 L1172.60,469.00 L1178.12,527.00 L1183.64,469.00 L1189.15,469.00 L1194.67,527.00 L1200.18,469.00 L1205.70,527.00 L1211.22,527.00 L1216.73,527.00 L1222.25,527.00 L1227.76,527.00 L1233.28,527.00 L1238.80,527.00 L1244.31,527.00 L1249.83,527.00 L1255.34,527.00 L1260.86,527.00 L1266.38,527.00 L1271.89,527.00 L1277.41,527.00 L1282.92,527.00" fill="none" stroke="#48bff7" stroke-width="2" stroke-linejoin="round"/>
<path d="M792.00,428.98 L797.52,527.00 L803.03,428.98 L808.55,428.98 L814.06,527.00 L819.58,428.98 L825.10,428.98 L830.61,527.00 L836.13,428.98 L841.64,428.98 L847.16,527.00 L852.68,428.98 L858.19,428.98 L863.71,527.00 L869.22,428.98 L874.74,428.98 L880.26,527.00 L885.77,428.98 L891.29,428.98 L896.80,527.00 L902.32,428.98 L907.84,428.98 L913.35,527.00 L918.87,428.98 L924.38,428.98 L929.90,527.00 L935.42,428.98 L940.93,428.98 L946.45,527.00 L951.96,428.98 L957.48,428.98 L963.00,527.00 L968.51,428.98 L974.03,428.98 L979.54,527.00 L985.06,428.98 L990.58,428.98 L996.09,527.00 L1001.61,428.98 L1007.12,428.98 L1012.64,527.00 L1018.16,428.98 L1023.67,428.98 L1029.19,527.00 L1034.70,428.98 L1040.22,428.98 L1045.74,527.00 L1051.25,428.98 L1056.77,428.98 L1062.28,527.00 L1067.80,428.98 L1073.32,428.98 L1078.83,527.00 L1084.35,428.98 L1089.86,428.98 L1095.38,527.00 L1100.90,428.98 L1106.41,428.98 L1111.93,527.00 L1117.44,428.98 L1122.96,428.98 L1128.48,527.00 L1133.99,428.98 L1139.51,428.98 L1145.02,527.00 L1150.54,428.98 L1156.06,428.98 L1161.57,527.00 L1167.09,428.98 L1172.60,428.98 L1178.12,527.00 L1183.64,428.98 L1189.15,428.98 L1194.67,527.00 L1200.18,428.98 L1205.70,527.00 L1211.22,527.00 L1216.73,527.00 L1222.25,527.00 L1227.76,527.00 L1233.28,527.00 L1238.80,527.00 L1244.31,527.00 L1249.83,527.00 L1255.34,527.00 L1260.86,527.00 L1266.38,527.00 L1271.89,527.00 L1277.41,527.00 L1282.92,527.00" fill="none" stroke="#f7c04a" stroke-width="2" stroke-linejoin="round"/>
<line x1="771.0" y1="777.50" x2="1193.0" y2="777.50" stroke="#eceef2" stroke-width="1"/>
<text x="761.5" y="780.60" text-anchor="end">0 ns</text>
<line x1="771.0" y1="748.50" x2="1193.0" y2="748.50" stroke="#eceef2" stroke-width="1"/>
<text x="761.5" y="751.60" text-anchor="end">2 ms</text>
<line x1="771.0" y1="719.50" x2="1193.0" y2="719.50" stroke="#eceef2" stroke-width="1"/>
<text x="761.5" y="722.60" text-anchor="end">4 ms</text>
<line x1="771.0" y1="690.50" x2="1193.0" y2="690.50" stroke="#eceef2" stroke-width="1"/>
<text x="761.5" y="693.60" text-anchor="end">6 ms</text>
<line x1="771.0" y1="661.50" x2="1193.0" y2="661.50" stroke="#eceef2" stroke-width="1"/>
<text x="761.5" y="664.60" text-anchor="end">8 ms</text>
<line x1="807.50" y1="778.00" x2="807.50" y2="782.00" stroke="#dfe2e6" stroke-width="1"/>
<text x="807.51" y="793.00" text-anchor="middle">15:08</text>
<line x1="863.50" y1="778.00" x2="863.50" y2="782.00" stroke="#dfe2e6" stroke-width="1"/>
<text x="863.78" y="793.00" text-anchor="middle">15:10</text>
<line x1="920.50" y1="778.00" x2="920.50" y2="782.00" stroke="#dfe2e6" stroke-width="1"/>
<text x="920.05" y="793.00" text-anchor="middle">15:12</text>
<line x1="976.50" y1="778.00" x2="976.50" y2="782.00" stroke="#dfe2e6" stroke-width="1"/>
<text x="976.32" y="793.00" text-anchor="middle">15:14</text>
<line x1="1032.50" y1="778.00" x2="1032.50" y2="782.00" stroke="#dfe2e6" stroke-width="1"/>
<text x="1032.58" y="793.00" text-anchor="middle">15:16</text>
<line x1="1088.50" y1="778.00" x2="1088.50" y2="782.00" stroke="#dfe2e6" stroke-width="1"/>
<text x="1088.85" y="793.00" text-anchor="middle">15:18</text>
<line x1="1145.50" y1="778.00" x2="1145.50" y2="782.00" stroke="#dfe2e6" stroke-width="1"/>
<text x="1145.12" y="793.00" text-anchor="middle">15:20</text>
<path d="M770.00,661.00 L774.69,777.00 L779.38,661.00 L784.07,661.00 L788.76,777.00 L793.45,661.00 L798.13,661.00 L802.82,777.00 L807.51,661.00 L812.20,661.00 L816.89,777.00 L821.58,661.00 L826.27,661.00 L830.96,777.00 L835.65,661.00 L840.34,661.00 L845.02,777.00 L849.71,661.00 L854.40,661.00 L859.09,777.00 L863.78,661.00 L868.47,661.00 L873.16,777.00 L877.85,661.00 L882.54,661.00 L887.23,777.00 L891.91,661.00 L896.60,661.00 L901.29,777.00 L905.98,661.00 L910.67,661.00 L915.36,777.00 L920.05,661.00 L924.74,661.00 L929.43,777.00 L934.12,661.00 L938.80,661.00 L943.49,777.00 L948.18,661.00 L952.87,661.00 L957.56,777.00 L962.25,661.00 L966.94,661.00 L971.63,777.00 L976.32,661.00 L981.00,661.00 L985.69,777.00 L990.38,661.00 L995.07,661.00 L999.76,777.00 L1004.45,661.00 L1009.14,661.00 L1013.83,777.00 L1018.52,661.00 L1023.21,661.00 L1027.89,777.00 L1032.58,661.00 L1037.27,661.00 L1041.96,777.00 L1046.65,661.00 L1051.34,661.00 L1056.03,777.00 L1060.72,661.00 L1065.41,661.00 L1070.10,777.00 L1074.79,661.00 L1079.47,661.00 L1084.16,777.00 L1088.85,661.00 L1093.54,661.00 L1098.23,777.00 L1102.92,661.00 L1107.61,661.00 L1112.30,777.00 L1116.99,661.00 L1121.67,777.00 L1126.36,777.00 L1131.05,777.00 L1135.74,777.00 L1140.43,777.00 L1145.12,777.00 L1149.81,777.00 L1154.50,777.00 L1159.19,777.00 L1163.88,777.00 L1168.57,777.00 L1173.25,777.00 L1177.94,777.00 L1182.63,777.00 L1187.32,777.00 L1187.32,777.00 L770.00,777.00 Z" fill="url(#go)"/>
<path d="M770.00,762.50 L774.69,777.00 L779.38,762.50 L784.07,762.50 L788.76,777.00 L793.45,762.50 L798.13,762.50 L802.82,777.00 L807.51,762.50 L812.20,762.50 L816.89,777.00 L821.58,762.50 L826.27,762.50 L830.96,777.00 L835.65,762.50 L840.34,762.50 L845.02,777.00 L849.71,762.50 L854.40,762.50 L859.09,777.00 L863.78,762.50 L868.47,762.50 L873.16,777.00 L877.85,762.50 L882.54,762.50 L887.23,777.00 L891.91,762.50 L896.60,762.50 L901.29,777.00 L905.98,762.50 L910.67,762.50 L915.36,777.00 L920.05,762.50 L924.74,762.50 L929.43,777.00 L934.12,762.50 L938.80,762.50 L943.49,777.00 L948.18,762.50 L952.87,762.50 L957.56,777.00 L962.25,762.50 L966.94,762.50 L971.63,777.00 L976.32,762.50 L981.00,762.50 L985.69,777.00 L990.38,762.50 L995.07,762.50 L999.76,777.00 L1004.45,762.50 L1009.14,762.50 L1013.83,777.00 L1018.52,762.50 L1023.21,762.50 L1027.89,777.00 L1032.58,762.50 L1037.27,762.50 L1041.96,777.00 L1046.65,762.50 L1051.34,762.50 L1056.03,777.00 L1060.72,762.50 L1065.41,762.50 L1070.10,777.00 L1074.79,762.50 L1079.47,762.50 L1084.16,777.00 L1088.85,762.50 L1093.54,762.50 L1098.23,777.00 L1102.92,762.50 L1107.61,762.50 L1112.30,777.00 L1116.99,762.50 L1121.67,777.00 L1126.36,777.00 L1131.05,777.00 L1135.74,777.00 L1140.43,777.00 L1145.12,777.00 L1149.81,777.00 L1154.50,777.00 L1159.19,777.00 L1163.88,777.00 L1168.57,777.00 L1173.25,777.00 L1177.94,777.00 L1182.63,777.00 L1187.32,777.00 L1187.32,777.00 L770.00,777.00 Z" fill="url(#gb)"/>
<path d="M770.00,762.50 L774.69,777.00 L779.38,762.50 L784.07,762.50 L788.76,777.00 L793.45,762.50 L798.13,762.50 L802.82,777.00 L807.51,762.50 L812.20,762.50 L816.89,777.00 L821.58,762.50 L826.27,762.50 L830.96,777.00 L835.65,762.50 L840.34,762.50 L845.02,777.00 L849.71,762.50 L854.40,762.50 L859.09,777.00 L863.78,762.50 L868.47,762.50 L873.16,777.00 L877.85,762.50 L882.54,762.50 L887.23,777.00 L891.91,762.50 L896.60,762.50 L901.29,777.00 L905.98,762.50 L910.67,762.50 L915.36,777.00 L920.05,762.50 L924.74,762.50 L929.43,777.00 L934.12,762.50 L938.80,762.50 L943.49,777.00 L948.18,762.50 L952.87,762.50 L957.56,777.00 L962.25,762.50 L966.94,762.50 L971.63,777.00 L976.32,762.50 L981.00,762.50 L985.69,777.00 L990.38,762.50 L995.07,762.50 L999.76,777.00 L1004.45,762.50 L1009.14,762.50 L1013.83,777.00 L1018.52,762.50 L1023.21,762.50 L1027.89,777.00 L1032.58,762.50 L1037.27,762.50 L1041.96,777.00 L1046.65,762.50 L1051.34,762.50 L1056.03,777.00 L1060.72,762.50 L1065.41,762.50 L1070.10,777.00 L1074.79,762.50 L1079.47,762.50 L1084.16,777.00 L1088.85,762.50 L1093.54,762.50 L1098.23,777.00 L1102.92,762.50 L1107.61,762.50 L1112.30,777.00 L1116.99,762.50 L1121.67,777.00 L1126.36,777.00 L1131.05,777.00 L1135.74,777.00 L1140.43,777.00 L1145.12,777.00 L1149.81,777.00 L1154.50,777.00 L1159.19,777.00 L1163.88,777.00 L1168.57,777.00 L1173.25,777.00 L1177.94,777.00 L1182.63,777.00 L1187.32,777.00" fill="none" stroke="#48bff7" stroke-width="2" stroke-linejoin="round"/>
<path d="M770.00,661.00 L774.69,777.00 L779.38,661.00 L784.07,661.00 L788.76,777.00 L793.45,661.00 L798.13,661.00 L802.82,777.00 L807.51,661.00 L812.20,661.00 L816.89,777.00 L821.58,661.00 L826.27,661.00 L830.96,777.00 L835.65,661.00 L840.34,661.00 L845.02,777.00 L849.71,661.00 L854.40,661.00 L859.09,777.00 L863.78,661.00 L868.47,661.00 L873.16,777.00 L877.85,661.00 L882.54,661.00 L887.23,777.00 L891.91,661.00 L896.60,661.00 L901.29,777.00 L905.98,661.00 L910.67,661.00 L915.36,777.00 L920.05,661.00 L924.74,661.00 L929.43,777.00 L934.12,661.00 L938.80,661.00 L943.49,777.00 L948.18,661.00 L952.87,661.00 L957.56,777.00 L962.25,661.00 L966.94,661.00 L971.63,777.00 L976.32,661.00 L981.00,661.00 L985.69,777.00 L990.38,661.00 L995.07,661.00 L999.76,777.00 L1004.45,661.00 L1009.14,661.00 L1013.83,777.00 L1018.52,661.00 L1023.21,661.00 L1027.89,777.00 L1032.58,661.00 L1037.27,661.00 L1041.96,777.00 L1046.65,661.00 L1051.34,661.00 L1056.03,777.00 L1060.72,661.00 L1065.41,661.00 L1070.10,777.00 L1074.79,661.00 L1079.47,661.00 L1084.16,777.00 L1088.85,661.00 L1093.54,661.00 L1098.23,777.00 L1102.92,661.00 L1107.61,661.00 L1112.30,777.00 L1116.99,661.00 L1121.67,777.00 L1126.36,777.00 L1131.05,777.00 L1135.74,777.00 L1140.43,777.00 L1145.12,777.00 L1149.81,777.00 L1154.50,777.00 L1159.19,777.00 L1163.88,777.00 L1168.57,777.00 L1173.25,777.00 L1177.94,777.00 L1182.63,777.00 L1187.32,777.00" fill="none" stroke="#f7c04a" stroke-width="2" stroke-linejoin="round"/>
</svg>
</body></html>
